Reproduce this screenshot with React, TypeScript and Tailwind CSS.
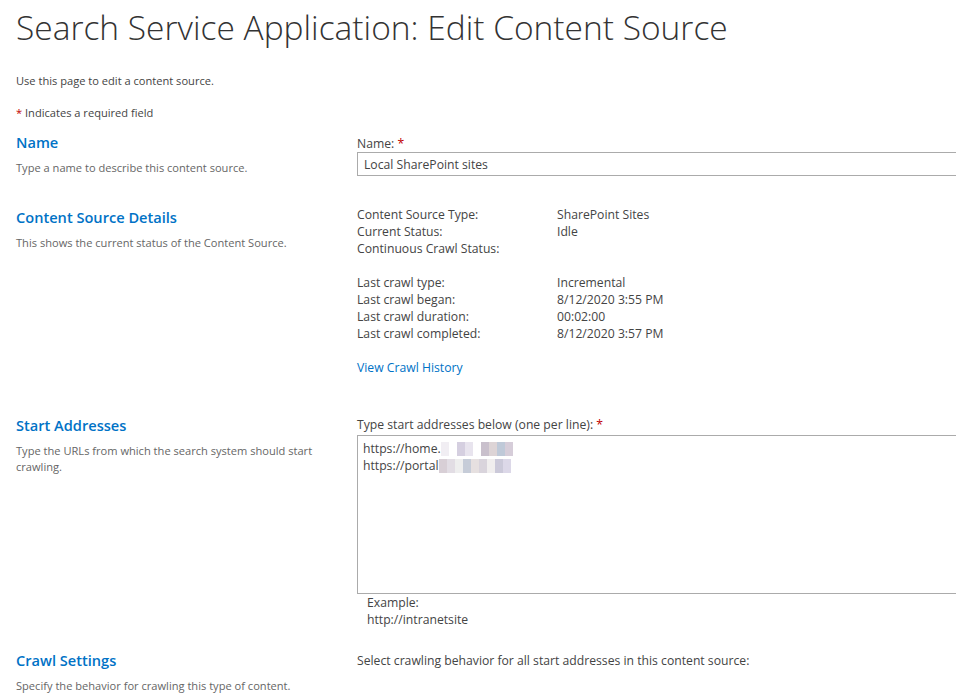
const font = { fontFamily: '"Segoe UI", "Open Sans", sans-serif' }

function Mosaic({ cells }: { cells: string[] }) {
  // pixelated (blurred) part of a URL
  return (
    <span className="inline-flex h-[14px] items-end align-[-2px]">
      {cells.map((c, i) => (
        <span key={i} className={`inline-block h-[14px] w-[8px] ${c}`} />
      ))}
    </span>
  )
}

function Heading({ children }: { children: React.ReactNode }) {
  return <h3 className="text-[14.6px] leading-[20px] font-semibold text-[#0072c6]">{children}</h3>
}

function Desc({ children }: { children: React.ReactNode }) {
  return <p className="mt-2 text-[11.1px] leading-[16px] text-[#666]">{children}</p>
}

export default function App() {
  return (
    <div className="min-h-screen overflow-hidden bg-white text-[12.2px] leading-[17px] text-[#444]" style={font}>
      <div className="pl-4">
        <h1 className="pt-[4px] text-[33.5px] leading-[46px] font-light text-[#333] whitespace-nowrap">
          Search Service Application: Edit Content Source
        </h1>

        <p className="mt-[23px] text-[11.1px] leading-[16px]">Use this page to edit a content source.</p>
        <p className="mt-4 text-[11.1px] leading-[16px]">
          <span className="text-[#bf0000]">*</span> Indicates a required field
        </p>

        {/* Name */}
        <div className="mt-[11px] grid grid-cols-[341px_1fr]">
          <div>
            <Heading>Name</Heading>
            <Desc>Type a name to describe this content source.</Desc>
          </div>
          <div className="pt-[3px]">
            <label className="block">
              Name: <span className="text-[#bf0000]">*</span>
            </label>
            <div className="flex h-[24px] items-center border border-[#ababab] pl-[6px] -mr-4">
              Local SharePoint sites
            </div>
          </div>
        </div>

        {/* Content Source Details */}
        <div className="mt-[31px] grid grid-cols-[341px_1fr]">
          <div>
            <Heading>Content Source Details</Heading>
            <Desc>This shows the current status of the Content Source.</Desc>
          </div>
          <div className="-mt-[1px]">
            <div className="grid grid-cols-[200px_1fr]">
              <span>Content Source Type:</span>
              <span>SharePoint Sites</span>
              <span>Current Status:</span>
              <span>Idle</span>
              <span>Continuous Crawl Status:</span>
              <span></span>
              <span className="col-span-2 h-[17px]"></span>
              <span>Last crawl type:</span>
              <span>Incremental</span>
              <span>Last crawl began:</span>
              <span>8/12/2020 3:55 PM</span>
              <span>Last crawl duration:</span>
              <span>00:02:00</span>
              <span>Last crawl completed:</span>
              <span>8/12/2020 3:57 PM</span>
            </div>
            <a className="mt-[17px] block text-[#0072c6]">View Crawl History</a>
          </div>
        </div>

        {/* Start Addresses */}
        <div className="mt-[39px] grid grid-cols-[341px_1fr]">
          <div>
            <Heading>Start Addresses</Heading>
            <Desc>
              Type the URLs from which the search system should start
              <br />
              crawling.
            </Desc>
          </div>
          <div className="pt-[1px]">
            <label className="block">
              Type start addresses below (one per line): <span className="text-[#bf0000]">*</span>
            </label>
            <div className="mt-[2px] h-[159px] border border-[#ababab] pl-[5px] pt-[4px] -mr-4">
              <div className="flex items-center">
                https://home.
                <Mosaic cells={["bg-[#f1eef3]", "bg-[#fff]", "bg-[#d5cfe0]", "bg-[#e8e4ee]", "bg-[#fff]", "bg-[#c9c0cc]", "bg-[#ddd4d6]", "bg-[#bfc9d8]", "bg-[#d6cdd9]"]} />
              </div>
              <div className="flex items-center">
                https://portal
                <Mosaic cells={["bg-[#d8cfd6]", "bg-[#e2dde4]", "bg-[#eeeeee]", "bg-[#c6ccd8]", "bg-[#e6e0e0]", "bg-[#d9d4dc]", "bg-[#f0eeee]", "bg-[#cbc9d9]", "bg-[#dcd8e8]"]} />
              </div>
            </div>
            <div className="pl-[10px]">
              <div>Example:</div>
              <div>http://intranetsite</div>
            </div>
          </div>
        </div>

        {/* Crawl Settings */}
        <div className="mt-[22px] grid grid-cols-[341px_1fr]">
          <div>
            <Heading>Crawl Settings</Heading>
            <Desc>Specify the behavior for crawling this type of content.</Desc>
          </div>
          <div className="pt-[2px]">
            <div>Select crawling behavior for all start addresses in this content source:</div>
            <label className="mt-[25px] flex items-center gap-[6px] pl-[5px]">
              <span className="inline-block h-[13px] w-[13px] rounded-full border border-[#999]" />
              Crawl everything under the hostname for each start address
            </label>
          </div>
        </div>
      </div>
    </div>
  )
}
